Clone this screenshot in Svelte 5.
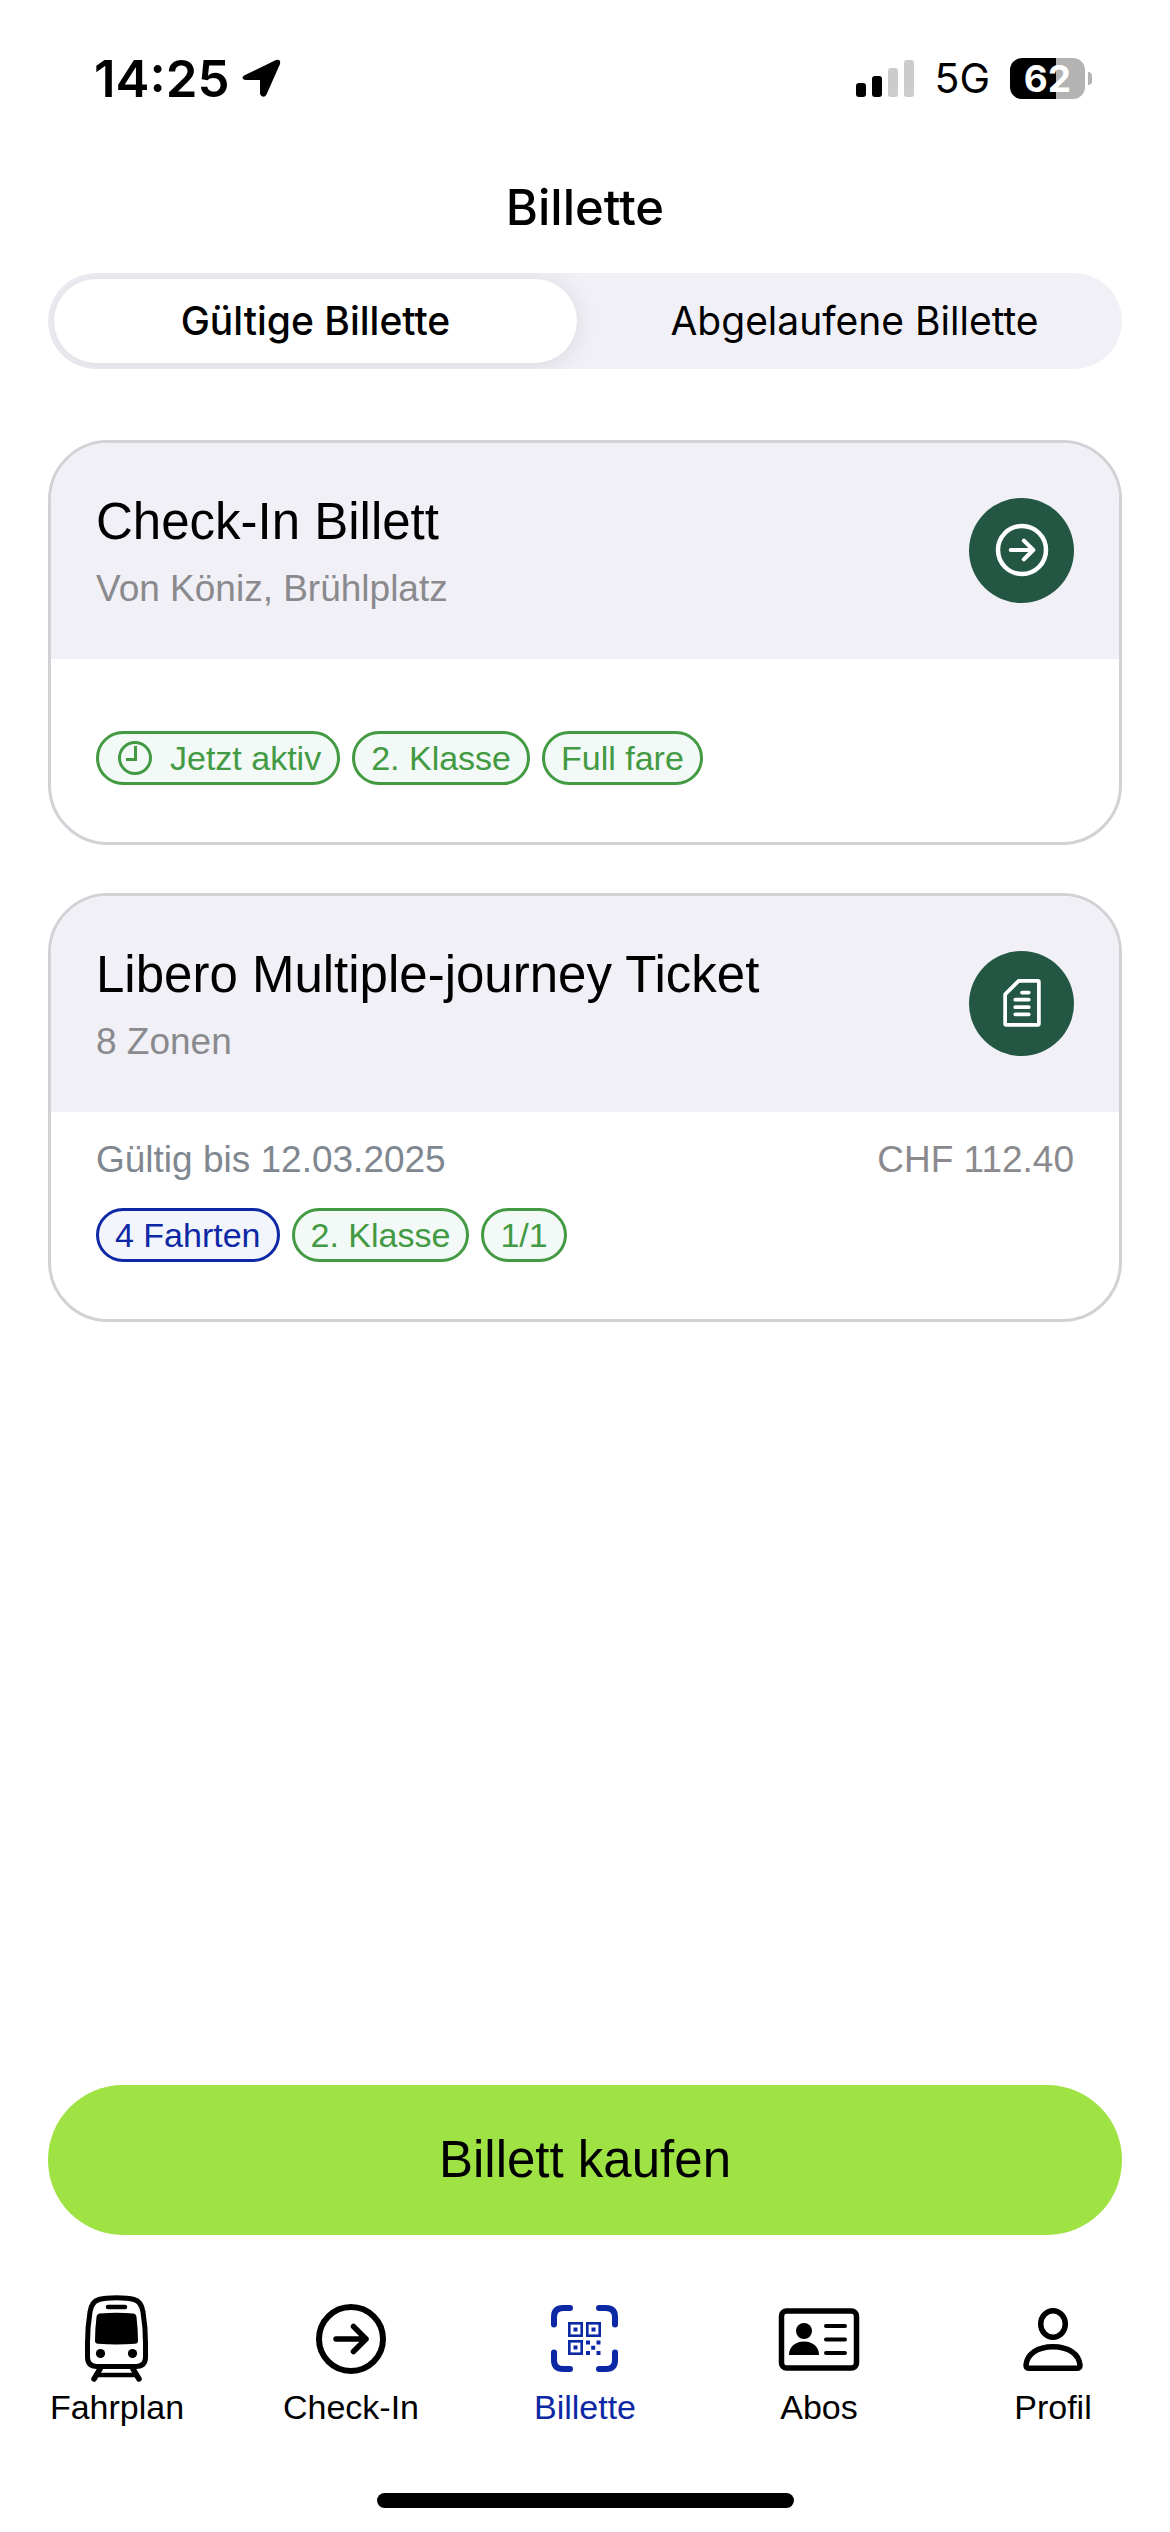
<script>
	/**
	 * @typedef {Object} Chip
	 * @property {string} label
	 * @property {'green' | 'blue'} tone
	 * @property {boolean} [clock] - Show the clock icon before the label
	 */

	const battery = 62;
	const signal = 2;

	const tabs = ['Gültige Billette', 'Abgelaufene Billette'];
	let activeTab = $state(0);

	const tickets = [
		{
			title: 'Check-In Billett',
			subtitle: 'Von Köniz, Brühlplatz',
			icon: 'arrow',
			chips: [
				{ label: 'Jetzt aktiv', tone: 'green', clock: true },
				{ label: '2. Klasse', tone: 'green' },
				{ label: 'Full fare', tone: 'green' },
			],
		},
		{
			title: 'Libero Multiple-journey Ticket',
			subtitle: '8 Zonen',
			icon: 'document',
			validity: 'Gültig bis 12.03.2025',
			price: 'CHF 112.40',
			chips: [
				{ label: '4 Fahrten', tone: 'blue' },
				{ label: '2. Klasse', tone: 'green' },
				{ label: '1/1', tone: 'green' },
			],
		},
	];

	const navItems = [
		{ label: 'Fahrplan', icon: 'train' },
		{ label: 'Check-In', icon: 'arrow' },
		{ label: 'Billette', icon: 'qr' },
		{ label: 'Abos', icon: 'card' },
		{ label: 'Profil', icon: 'person' },
	];
	let activeNav = $state('Billette');
</script>

{#snippet icon(name)}
	<svg class="icon" viewBox="0 0 96 96" aria-hidden="true">
		{#if name === 'train'}
			<g fill="none" stroke="currentColor" stroke-width="5">
				<path
					d="M30 8.5C38 6.3 57 6.3 65 8.5C70.5 10 73 14 74 21C75.5 30 76.5 44 76.5 52V66Q76.5 75.5 67 75.5H28Q18.5 75.5 18.5 66V52C18.5 44 19.5 30 21 21C22 14 24.5 10 30 8.5Z" />
				<path d="M39 16H56" stroke-width="4.5" stroke-linecap="round" />
				<path d="M31 78L25 88M64 78L70 88" stroke-width="5.5" stroke-linecap="round" />
				<path d="M28 84H67" stroke-width="4.5" />
			</g>
			<g fill="currentColor">
				<path
					d="M31 22.5Q47.5 21 64 22.5Q67 22.5 67.5 26Q69 38 69 50Q69 52.5 66 52.8Q47.5 54 29 52.8Q26 52.5 26 50Q26 38 27.5 26Q28 22.5 31 22.5Z" />
				<circle cx="31.5" cy="62.5" r="4.6" />
				<circle cx="63.5" cy="62.5" r="4.6" />
			</g>
		{:else if name === 'arrow'}
			<g
				fill="none"
				stroke="currentColor"
				stroke-width="6"
				stroke-linecap="round"
				stroke-linejoin="round">
				<circle cx="48" cy="48" r="32" />
				<path d="M33 48H63M50.5 35.5L63 48L50.5 60.5" stroke-width="5.5" />
			</g>
		{:else if name === 'qr'}
			<path
				d="M33 17H26Q17 17 17 26V33.5M62 17H69Q78 17 78 26V33.5M78 61.5V69Q78 78 69 78H62M33 78H26Q17 78 17 69V61.5"
				fill="none"
				stroke="currentColor"
				stroke-width="6"
				stroke-linecap="round" />
			<g fill="none" stroke="currentColor" stroke-width="2.6">
				<rect x="32.3" y="32.3" width="12.4" height="12.4" />
				<rect x="50.3" y="32.3" width="12.4" height="12.4" />
				<rect x="32.3" y="50.3" width="12.4" height="12.4" />
			</g>
			<path
				fill="currentColor"
				d="M36.5 36.5h4v4h-4zM54.5 36.5h4v4h-4zM36.5 54.5h4v4h-4zM49 49.5h4v4h-4zM59.5 49.5h4v4h-4zM54.2 54.8h4v4h-4zM49 60h4v4h-4zM59.5 60h4v4h-4z" />
		{:else if name === 'card'}
			<rect
				x="10.5"
				y="20"
				width="75"
				height="57"
				rx="5"
				fill="none"
				stroke="currentColor"
				stroke-width="5.5" />
			<g fill="currentColor">
				<circle cx="33" cy="40" r="8" />
				<path d="M18 64C18 56 24 50.5 33 50.5S48 56 48 64Z" />
			</g>
			<path
				d="M55 35H74M55 48.5H74M55 62H74"
				stroke="currentColor"
				stroke-width="4"
				stroke-linecap="round" />
		{:else if name === 'person'}
			<g fill="none" stroke="currentColor" stroke-width="5.5">
				<ellipse cx="48" cy="33" rx="12.3" ry="13.2" />
				<path
					d="M24.5 77.3H71.5Q75 77.3 75 74C74 63 63.5 55.7 48 55.7S22 63 21 74Q21 77.3 24.5 77.3Z" />
			</g>
		{:else if name === 'document'}
			<g
				fill="none"
				stroke="currentColor"
				stroke-width="5"
				stroke-linecap="round"
				stroke-linejoin="round">
				<path d="M43.5 18.5H69Q70.5 18.5 70.5 20V75.5Q70.5 77 69 77H27Q25.5 77 25.5 75.5V36.5Z" />
				<path d="M48 34H57M39 43.5H57M39 53.5H57M39 63H57" />
			</g>
		{/if}
	</svg>
{/snippet}

<div class="screen">
	<div class="status">
		<div class="status-side">
			<span class="time">14:25</span>
			<svg class="location" viewBox="0 0 40 40" aria-hidden="true">
				<path
					d="M3 17L34 2Q39 .5 38 6L24.5 36.5Q22.5 40 19.5 38Q18 37 18 35V22H4Q.5 21.5 .5 19.5Q.5 18 3 17Z" />
			</svg>
		</div>
		<div class="status-side">
			<svg class="signal" viewBox="0 0 58 38" aria-hidden="true">
				{#each [14, 21, 29, 37] as height, i}
					<rect
						class:off={i >= signal}
						x={i * 16}
						y={38 - height}
						width="10"
						{height}
						rx="3" />
				{/each}
			</svg>
			<span class="network">5G</span>
			<div class="battery">
				<span class="battery-body" style="--level: {battery}%">{battery}</span>
				<span class="battery-tip"></span>
			</div>
		</div>
	</div>

	<h1>Billette</h1>

	<div class="segments" role="tablist">
		{#each tabs as tab, i}
			<button
				class="segment"
				class:selected={activeTab === i}
				role="tab"
				aria-selected={activeTab === i}
				onclick={() => (activeTab = i)}>
				{tab}
			</button>
		{/each}
	</div>

	<main>
		{#each tickets as ticket}
			<article class="ticket">
				<header>
					<div>
						<h2>{ticket.title}</h2>
						<p>{ticket.subtitle}</p>
					</div>
					<button class="round" aria-label={ticket.title}>
						{@render icon(ticket.icon)}
					</button>
				</header>
				<div class="body" class:no-info={!ticket.validity}>
					{#if ticket.validity}
						<div class="info">
							<span class="validity">{ticket.validity}</span>
							<span>{ticket.price}</span>
						</div>
					{/if}
					<div class="chips">
						{#each ticket.chips as chip}
							<span class="chip {chip.tone}">
								{#if chip.clock}
									<svg class="clock" viewBox="0 0 40 40" aria-hidden="true">
										<circle cx="20" cy="20" r="15.5" />
										<path d="M20.5 8V21.5H11" />
									</svg>
								{/if}
								{chip.label}
							</span>
						{/each}
					</div>
				</div>
			</article>
		{/each}
	</main>

	<button class="buy">Billett kaufen</button>

	<nav>
		{#each navItems as item}
			<a
				href="#{item.label}"
				class:current={activeNav === item.label}
				aria-current={activeNav === item.label ? 'page' : undefined}
				onclick={() => (activeNav = item.label)}>
				{@render icon(item.icon)}
				{item.label}
			</a>
		{/each}
	</nav>

	<div class="home-bar"></div>
</div>

<style>
	:global(body) {
		margin: 0;
		background: #fff;
	}

	.screen {
		display: flex;
		flex-direction: column;
		box-sizing: border-box;
		min-height: 100vh;
		padding-bottom: 24px;
		font-family: 'Liberation Sans', Arial, sans-serif;
		color: #000;
	}

	button {
		padding: 0;
		border: 0;
		font-family: inherit;
		color: inherit;
		cursor: pointer;
	}

	h1,
	h2,
	p {
		margin: 0;
		font-weight: 400;
	}

	.icon {
		display: block;
		width: 96px;
		height: 96px;
	}

	.status {
		display: flex;
		justify-content: space-between;
		align-items: center;
		height: 156px;
		padding: 0 78px 0 94px;
		font-family: Inter, sans-serif;
	}

	.status-side {
		display: flex;
		align-items: center;
	}

	.time {
		font-size: 51px;
		font-weight: 600;
	}

	.location {
		width: 40px;
		height: 40px;
		margin-left: 12px;
	}

	.signal {
		width: 58px;
		height: 38px;

		.off {
			fill: #ccc;
		}
	}

	.network {
		margin: 0 20px;
		font-size: 41px;
	}

	.battery {
		display: flex;
		align-items: center;
		gap: 3px;
	}

	.battery-body {
		width: 75px;
		border-radius: 12px;
		background: linear-gradient(to right, #000 var(--level), #b3b3b3 var(--level));
		color: #fff;
		font-size: 37px;
		font-weight: 700;
		line-height: 41px;
		text-align: center;
	}

	.battery-tip {
		width: 4px;
		height: 13px;
		border-radius: 0 4px 4px 0;
		background: #b3b3b3;
	}

	h1 {
		font-family: Inter, sans-serif;
		font-size: 49px;
		font-weight: 500;
		line-height: 104px;
		text-align: center;
	}

	.segments {
		display: flex;
		gap: 16px;
		margin: 13px 48px 0;
		padding: 6px;
		border-radius: 48px;
		background: #f1f0f6;
		overflow: hidden;
	}

	.segment {
		flex: 1;
		border-radius: 42px;
		background: none;
		font-family: Inter, sans-serif;
		font-size: 39px;
		line-height: 84px;

		&.selected {
			background: #fff;
			box-shadow: 0 2px 24px rgb(0 0 0 / 10%);
			font-weight: 500;
		}
	}

	main {
		display: flex;
		flex: 1;
		flex-direction: column;
		gap: 48px;
		padding: 71px 48px 48px;
	}

	.ticket {
		border: 3px solid #d1d1d6;
		border-radius: 60px;
		overflow: hidden;

		header {
			display: flex;
			justify-content: space-between;
			align-items: center;
			padding: 40px 45px 42px;
			background: #f1f0f6;
		}

		h2 {
			font-size: 51px;
			line-height: 78px;
		}

		p {
			color: #8a8a8e;
			font-size: 37px;
			line-height: 56px;
		}
	}

	.round {
		display: grid;
		place-items: center;
		width: 105px;
		height: 105px;
		border-radius: 50%;
		background: #235643;
		color: #fff;

		.icon {
			width: 72px;
			height: 72px;
		}
	}

	.body {
		display: flex;
		flex-direction: column;
		gap: 24px;
		padding: 24px 45px 57px;

		&.no-info {
			padding-top: 72px;
		}
	}

	.info {
		display: flex;
		justify-content: space-between;
		color: #8a8a8e;
		font-size: 37px;
		line-height: 48px;
	}

	.validity {
		color: #7f8790;
	}

	.chips {
		display: flex;
		gap: 12px;
	}

	.chip {
		display: flex;
		align-items: center;
		padding: 0 16px;
		border: 3px solid;
		border-radius: 27px;
		font-size: 34px;
		line-height: 48px;

		&.green {
			background: #f3f9f6;
			color: #429a43;
		}

		&.blue {
			background: #f3f5fc;
			color: #0d28a5;
		}
	}

	.clock {
		width: 40px;
		height: 40px;
		margin-right: 15px;
		fill: none;
		stroke: currentColor;
		stroke-width: 3;
	}

	.buy {
		margin: 0 48px;
		border-radius: 75px;
		background: #9fe244;
		font-size: 51px;
		line-height: 150px;
	}

	nav {
		display: grid;
		grid-template-columns: repeat(5, 1fr);
		margin-top: 56px;

		a {
			display: flex;
			flex-direction: column;
			align-items: center;
			color: #000;
			font-size: 34px;
			line-height: 40px;
			text-decoration: none;

			&.current {
				color: #0d28a5;
			}
		}
	}

	.home-bar {
		align-self: center;
		width: 417px;
		height: 15px;
		margin-top: 66px;
		border-radius: 8px;
		background: #000;
	}
</style>
